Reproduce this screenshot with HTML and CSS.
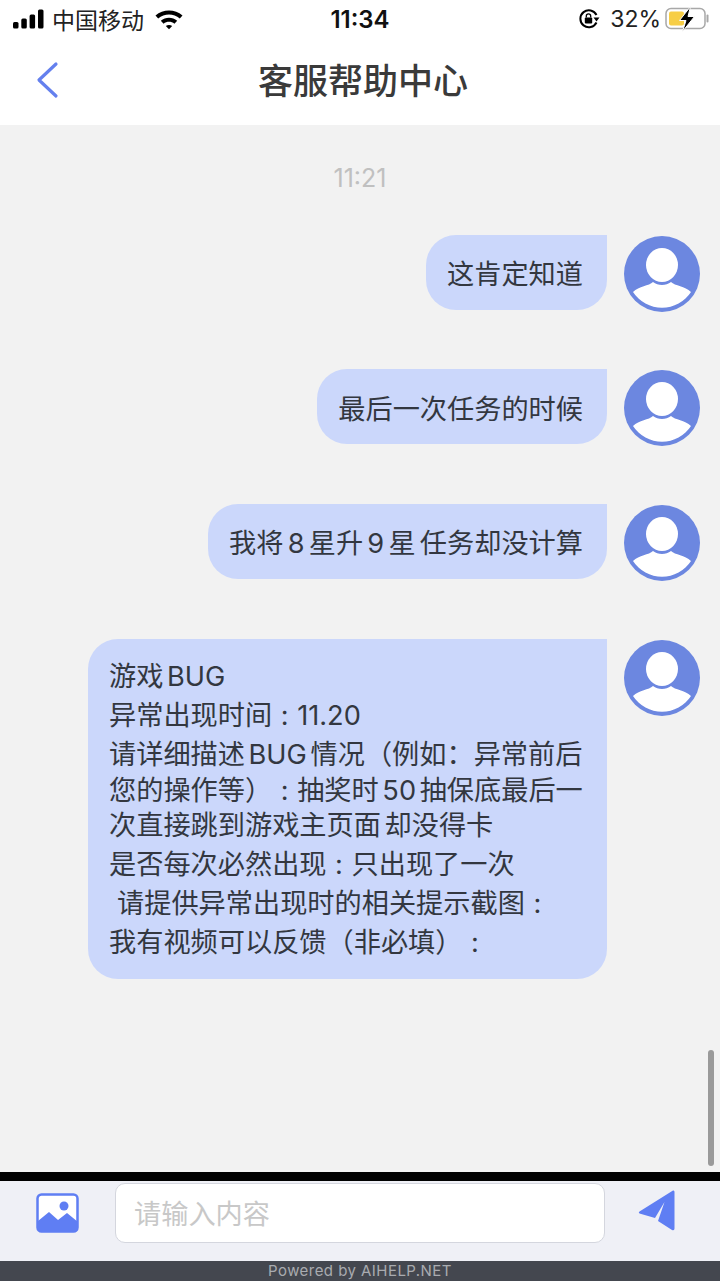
FILE: index.html
```html
<!DOCTYPE html>
<html lang="zh">
<head>
  <meta charset="UTF-8" />
  <meta name="viewport" content="width=device-width, initial-scale=1.0" />
  <title>客服帮助中心</title>
  <link rel="stylesheet" href="styles.css">
</head>
<body>
  <div class="status-bar">
    <div class="status-left">
      <svg class="signal" width="32" height="20" viewBox="0 0 32 20">
        <rect x="1" y="13" width="5.500" height="6.500" rx="1.500" fill="#000"/>
        <rect x="9.300" y="9.500" width="5.500" height="10" rx="1.500" fill="#000"/>
        <rect x="17.600" y="5.500" width="5.500" height="14" rx="1.500" fill="#000"/>
        <rect x="26" y="0.500" width="5.500" height="19" rx="1.500" fill="#000"/>
      </svg>
      <span class="carrier">中国移动</span>
      <svg class="wifi" width="30" height="22" viewBox="0 0 30 22">
        <path d="M1.500 7.500C9 .8 21 .8 28.500 7.500L25.800 10.500C19.600 5.200 10.400 5.200 4.200 10.500Z" fill="#000"/>
        <path d="M6.800 12.800C11.500 8.800 18.500 8.800 23.200 12.800L20.400 15.700C17.200 13.100 12.800 13.100 9.600 15.700Z" fill="#000"/>
        <path d="M11.800 18C13.700 16.500 16.300 16.500 18.200 18L15 21.300Z" fill="#000"/>
      </svg>
    </div>
    <div class="status-time">11:34</div>
    <div class="status-right">
      <svg class="lock" width="22" height="22" viewBox="0 0 22 22">
        <path d="M18.500 14.500A8.500 8.500 0 1 1 18.500 7" fill="none" stroke="#000" stroke-width="2"/>
        <path d="M15.500 9.500L21.500 9.500L18.500 13.500Z" fill="#000"/>
        <rect x="6.800" y="9.500" width="7.400" height="6" rx="1" fill="#000"/>
        <path d="M8.300 9.500V8a2.200 2.200 0 0 1 4.400 0V9.500" fill="none" stroke="#000" stroke-width="1.300"/>
      </svg>
      <span class="battery-pct">32%</span>
      <svg class="battery" width="46" height="26" viewBox="0 0 46 26">
        <rect x="1" y="2.500" width="39" height="20" rx="5" fill="#fff" stroke="#a8a8a8" stroke-width="1.500"/>
        <rect x="4" y="5.500" width="15" height="14" rx="2" fill="#f7ce46"/>
        <path d="M42.500 9.500V15.500" stroke="#a8a8a8" stroke-width="2" stroke-linecap="round"/>
        <path d="M25.500 0.500L14.500 14.500H21L17.500 25.500L29.500 10.500H23Z" fill="#000" stroke="#fff" stroke-width="1"/>
      </svg>
    </div>
  </div>

  <header class="nav-bar">
    <svg class="back" width="24" height="38" viewBox="0 0 24 38">
      <path d="M21 3L4 19L21 35" fill="none" stroke="#6480ee" stroke-width="3.200" stroke-linecap="round" stroke-linejoin="round"/>
    </svg>
    <h1>客服帮助中心</h1>
  </header>

  <main class="chat">
    <div class="time-label">11:21</div>

    <div class="row">
      <div class="bubble">这肯定知道</div>
      <svg class="avatar" viewBox="0 0 78 78"><use href="#person"/></svg>
    </div>
    <div class="row">
      <div class="bubble">最后一次任务的时候</div>
      <svg class="avatar" viewBox="0 0 78 78"><use href="#person"/></svg>
    </div>
    <div class="row">
      <div class="bubble wide-spaces">我将 8 星升 9 星 任务却没计算</div>
      <svg class="avatar" viewBox="0 0 78 78"><use href="#person"/></svg>
    </div>
    <div class="row">
      <div class="bubble bubble-long">
        <div class="line">游戏 BUG</div>
        <div class="line">异常出现时间<span class="colon">:</span>11.20</div>
        <div class="line">请详细描述 BUG 情况（例如：异常前后</div>
        <div class="line short">您的操作等）<span class="colon">:</span>抽奖时 50 抽保底最后一</div>
        <div class="line tall">次直接跳到游戏主页面 却没得卡</div>
        <div class="line">是否每次必然出现<span class="colon">:</span>只出现了一次</div>
        <div class="line indent">请提供异常出现时的相关提示截图<span class="colon">:</span></div>
        <div class="line">我有视频可以反馈（非必填）<span class="colon">:</span></div>
      </div>
      <svg class="avatar" viewBox="0 0 78 78"><use href="#person"/></svg>
    </div>

    <div class="scroll-thumb"></div>
  </main>

  <div class="black-strip"></div>

  <div class="input-area">
    <svg class="pic-btn" width="44" height="40" viewBox="0 0 44 40">
      <rect x="1.500" y="1.500" width="40" height="37" rx="4" fill="#fff" stroke="#5f7ef3" stroke-width="2.500"/>
      <circle cx="28" cy="13" r="4.500" fill="#5f7ef3"/>
      <path d="M2 28L13 19L22 27L31 20L42 29V35a4 4 0 0 1-4 4H6a4 4 0 0 1-4-4Z" fill="#5f7ef3"/>
    </svg>
    <div class="text-input">请输入内容</div>
    <svg class="send-btn" width="38" height="44" viewBox="0 0 38 44">
      <path d="M35 1.500Q36.500 1 36.500 3V39.500Q36.500 42 34 41L20 32L26.500 13L17 29L1.500 24.500Q0 23.500 1.500 22.500Z" fill="#5f7ef3"/>
    </svg>
  </div>

  <footer class="powered">Powered by AIHELP.NET</footer>

  <svg width="0" height="0" class="defs">
    <defs>
      <g id="person">
        <circle cx="39" cy="39" r="38" fill="#6c87e0"/>
        <ellipse cx="39" cy="30" rx="16" ry="17" fill="#fff"/>
        <path d="M10 57C16 51 26 51 30 47C35 51 43 51 48 47C52 51 62 51 68 57A34.500 34.500 0 0 1 10 57Z" fill="#fff"/>
      </g>
    </defs>
  </svg>
</body>
</html>
```

FILE: styles.css
```css
* {
  margin: 0;
  padding: 0;
  box-sizing: border-box;
}

body {
  width: 720px;
  height: 1281px;
  overflow: hidden;
  display: flex;
  flex-direction: column;
  font-family: Inter, 'Noto Sans CJK SC', sans-serif;
  background-color: #f2f2f2;
  color: #333740;
}

.defs {
  position: absolute;
}

/* Status bar */
.status-bar {
  height: 40px;
  background-color: #fff;
  color: #000;
  padding: 0 12px 3px;
  display: grid;
  grid-template-columns: 1fr auto 1fr;
  align-items: center;
}

.status-left {
  display: flex;
  align-items: center;
}

.carrier {
  font-size: 23px;
  color: #222;
  margin-left: 8px;
}

.wifi {
  margin-left: 10px;
}

.status-time {
  font-size: 24px;
  font-weight: 600;
  color: #111;
  margin-top: 2px;
}

.status-right {
  display: flex;
  align-items: center;
  justify-content: flex-end;
  margin-right: -3px;
}

.battery-pct {
  font-size: 23px;
  color: #222;
  margin-left: 10px;
  margin-right: 4px;
}

/* Nav */
.nav-bar {
  height: 85px;
  background-color: #fff;
  display: flex;
  align-items: center;
  justify-content: center;
  position: relative;
}

.nav-bar h1 {
  font-size: 35px;
  font-weight: 500;
  color: #3a3a3a;
  margin-left: 6px;
  margin-top: -8px;
}

.back {
  position: absolute;
  left: 35px;
  top: 21px;
}

/* Chat */
.chat {
  height: 1047px;
  position: relative;
  padding: 39px 19px 0 0;
  display: flex;
  flex-direction: column;
  gap: 56.670px;
}

.time-label {
  text-align: center;
  font-size: 25px;
  line-height: 28px;
  color: #c0c0c0;
  margin-bottom: -14px;
  margin-right: -19px;
}

.row {
  display: flex;
  justify-content: flex-end;
  align-items: flex-start;
  gap: 16px;
}

.bubble {
  background-color: #cbd7fb;
  border-radius: 30px 0 30px 30px;
  padding: 0 24px 0 21px;
  height: 75px;
  display: flex;
  align-items: center;
  font-size: 27.200px;
  word-spacing: -4px;
  color: #333740;
  white-space: nowrap;
}

.bubble.wide-spaces {
  word-spacing: -3.400px;
}

.bubble-long {
  height: auto;
  width: 519px;
  display: block;
  padding: 18px 21px 17px;
}

.line {
  line-height: 39px;
}

.line.short {
  line-height: 33px;
}

.line.tall {
  line-height: 38px;
}

.line.indent {
  padding-left: 8px;
}

.colon {
  display: inline-block;
  width: 25px;
  text-align: center;
}

.avatar {
  width: 78px;
  height: 78px;
  flex-shrink: 0;
}

.scroll-thumb {
  position: absolute;
  left: 708px;
  top: 925px;
  width: 6px;
  height: 116px;
  border-radius: 3px;
  background-color: #9a9a9a;
}

.black-strip {
  height: 9px;
  background-color: #000;
}

/* Input */
.input-area {
  height: 80px;
  background-color: #eff0f6;
  display: flex;
  align-items: flex-start;
  padding-left: 36px;
}

.pic-btn {
  margin-top: 12px;
}

.text-input {
  width: 490px;
  height: 60px;
  margin: 2px 0 0 35px;
  background-color: #fff;
  border: 1px solid #d4d6de;
  border-radius: 10px;
  padding: 0 0 3px 18px;
  display: flex;
  align-items: center;
  font-size: 27.200px;
  color: #c8c8c8;
}

.send-btn {
  margin: 8px 0 0 33px;
}

.powered {
  height: 20px;
  background-color: #44474f;
  color: #a9abb0;
  font-size: 15px;
  letter-spacing: 0.450px;
  line-height: 20px;
  text-align: center;
}
```
